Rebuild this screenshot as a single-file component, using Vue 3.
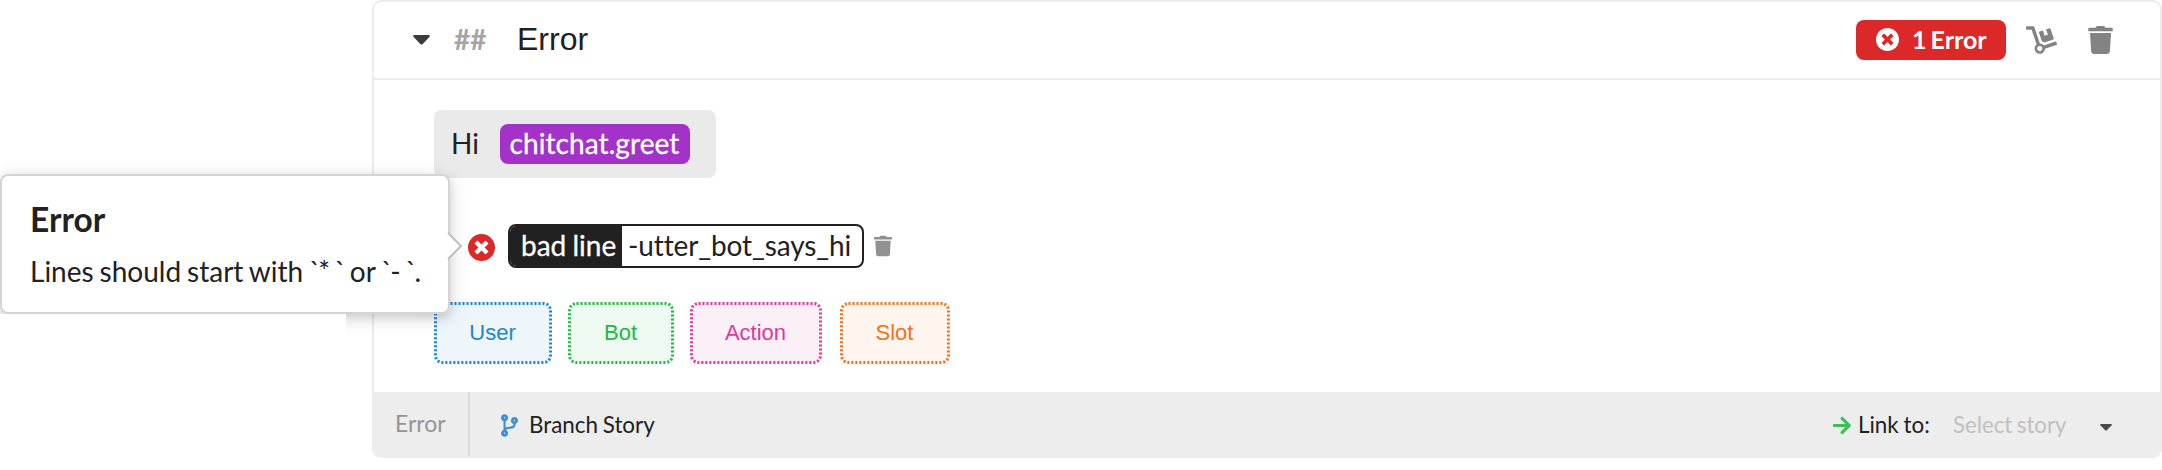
<script setup>
const paths = {
  error: 'M256 8C119 8 8 119 8 256s111 248 248 248 248-111 248-248S393 8 256 8zm121.6 313.1c4.7 4.7 4.7 12.3 0 17L338 377.6c-4.7 4.7-12.3 4.7-17 0L256 312l-65.1 65.6c-4.7 4.7-12.3 4.7-17 0L134.4 338c-4.7-4.7-4.7-12.3 0-17l65.6-65-65.6-65.1c-4.7-4.7-4.7-12.3 0-17l39.6-39.6c4.7-4.7 12.3-4.7 17 0l65 65.7 65.1-65.6c4.7-4.7 12.3-4.7 17 0l39.6 39.6c4.7 4.7 4.7 12.3 0 17L312 256l65.6 65.1z',
  trash: 'M432 32H312l-9.4-18.7A24 24 0 0 0 281.1 0H166.8a23.72 23.72 0 0 0-21.4 13.3L136 32H16A16 16 0 0 0 0 48v32a16 16 0 0 0 16 16h416a16 16 0 0 0 16-16V48a16 16 0 0 0-16-16zM32 128l21.2 339a48 48 0 0 0 47.9 45h245.8a48 48 0 0 0 47.9-45L416 128z',
  dolly: 'M294.2 277.7c18 5 34.7 13.4 49.5 24.7l161.5-53.8c8.4-2.8 12.9-11.9 10.1-20.2L454.9 47.2c-2.8-8.4-11.9-12.9-20.2-10.1l-61.1 20.4 33.1 99.4L346 177l-33.1-99.4-61.6 20.5c-8.4 2.8-12.9 11.9-10.1 20.2l53 159.4zm281 48.7L565 296c-2.8-8.4-11.9-12.9-20.2-10.1l-213.5 71.2c-17.2-22-43.6-36.4-73.5-37L158.4 21.9C154 8.8 141.8 0 128 0H16C7.2 0 0 7.2 0 16v32c0 8.8 7.2 16 16 16h88.9l92.2 276.7c-26.1 20.4-41.7 53.6-36 90.5 6.1 39.4 37.9 72.3 77.3 79.2 60.2 10.7 112.3-34.8 113.4-92.6l213.3-71.2c8.3-2.8 12.9-11.8 10.1-20.2zM256 464c-26.5 0-48-21.5-48-48s21.5-48 48-48 48 21.5 48 48-21.5 48-48 48z',
  branch: 'M384 144c0-44.2-35.8-80-80-80s-80 35.8-80 80c0 36.4 24.3 67.1 57.5 76.8-.6 16.1-4.2 28.5-11 36.9-15.4 19.2-49.3 22.4-85.2 25.7-28.2 2.6-57.4 5.4-81.3 16.9v-144c32.5-10.2 56-40.5 56-76.3 0-44.2-35.8-80-80-80S0 35.8 0 80c0 35.8 23.5 66.1 56 76.3v199.3C23.5 365.9 0 396.2 0 432c0 44.2 35.8 80 80 80s80-35.8 80-80c0-34-21.2-63.1-51.2-74.6 3.1-5.2 7.8-9.8 14.9-13.4 16.2-8.2 40.4-10.4 66.1-12.8 42.2-3.9 90-8.4 118.2-43.4 14-17.4 21.1-39.8 21.6-67.9 31.6-10.8 54.4-40.7 54.4-75.9zM80 64c8.8 0 16 7.2 16 16s-7.2 16-16 16-16-7.2-16-16 7.2-16 16-16zm0 384c-8.8 0-16-7.2-16-16s7.2-16 16-16 16 7.2 16 16-7.2 16-16 16zm224-320c8.8 0 16 7.2 16 16s-7.2 16-16 16-16-7.2-16-16 7.2-16 16-16z',
  arrow: 'M190.5 66.9l22.2-22.2c9.4-9.4 24.6-9.4 33.9 0L441 239c9.4 9.4 9.4 24.6 0 33.9L246.6 467.3c-9.4 9.4-24.6 9.4-33.9 0l-22.2-22.2c-9.5-9.5-9.3-25 .4-34.3L311.4 296H24c-13.3 0-24-10.7-24-24v-32c0-13.3 10.7-24 24-24h287.4L190.9 101.2c-9.8-9.3-10-24.8-.4-34.3z',
}
const actions = [
  { label: 'User', kind: 'user', w: 118 },
  { label: 'Bot', kind: 'bot', w: 106 },
  { label: 'Action', kind: 'action', w: 132 },
  { label: 'Slot', kind: 'slot', w: 110 },
]
</script>

<template>
  <div class="page">
    <section class="card">
      <header class="head">
        <svg class="caret" viewBox="0 0 17 10"><path d="M1.2 0h14.6q1.4.3.8 1.7L9.7 9q-1.2 1.2-2.4 0L.4 1.7Q-.2.3 1.2 0z" /></svg>
        <span class="hashes">##</span>
        <span class="title">Error</span>
        <span class="count">
          <svg viewBox="8 8 496 496"><path :d="paths.error" /></svg>
          <span class="up">1 Error</span>
        </span>
        <svg class="dolly" viewBox="0 0 576 512"><path :d="paths.dolly" /></svg>
        <svg class="trash" viewBox="0 0 448 512"><path :d="paths.trash" /></svg>
      </header>
      <div class="body">
        <div class="bubble"><span class="hi up">Hi</span><span class="intent"><span class="up">chitchat.greet</span></span></div>
        <div class="line">
          <svg class="bad" viewBox="8 8 496 496"><path :d="paths.error" /></svg>
          <div class="label"><span class="key"><span class="up">bad line</span></span><span class="value up">-utter_bot_says_hi</span></div>
          <svg class="trash small" viewBox="0 0 448 512"><path :d="paths.trash" /></svg>
        </div>
        <div class="actions">
          <button v-for="a in actions" :key="a.kind" :class="['add', a.kind]">
            <svg class="outline" :viewBox="`0 0 ${a.w} 62`"><rect x="1.5" y="1.5" :width="a.w - 3" height="59" rx="7" /></svg>
            <span>{{ a.label }}</span>
          </button>
        </div>
      </div>
      <footer class="foot">
        <span class="crumb">Error</span>
        <svg class="branch" viewBox="0 0 384 512"><path :d="paths.branch" /></svg>
        <span class="branch-text up">Branch Story</span>
        <svg class="arrow" viewBox="0 38 448 436"><path :d="paths.arrow" /></svg>
        <span class="link up">Link to:</span>
        <span class="select up">Select story</span>
        <svg class="caret tiny" viewBox="0 0 17 10"><path d="M1.2 0h14.6q1.4.3.8 1.7L9.7 9q-1.2 1.2-2.4 0L.4 1.7Q-.2.3 1.2 0z" /></svg>
      </footer>
    </section>
    <div class="shade"><div class="shade-box"></div></div>
    <aside class="popup">
      <h4>Error</h4>
      <p>Lines should start with <span class="code">`* `</span> or <span class="code">`- `</span>.</p>
      <svg class="pointer" viewBox="0 0 16 30"><path class="fill" d="M0 1L14 15L0 29z" /><path class="edge" d="M1 2L14 15L1 28" /></svg>
    </aside>
  </div>
</template>

<style>
body { background: #fff; }
</style>

<style scoped>
* { box-sizing: border-box; }
.page { position: relative; width: 2162px; height: 470px; overflow: hidden; font-family: Lato, "Liberation Sans", sans-serif; font-variant-ligatures: none; color: #212121; white-space: nowrap; }
svg { display: block; flex: none; fill: currentColor; }
.up { padding-bottom: 2px; }
.card { display: flex; flex-direction: column; width: 1790px; height: 458px; margin-left: 372px; border: 2px solid #ececec; border-bottom: 0; border-radius: 9px; overflow: hidden; }
.head { display: flex; align-items: center; height: 78px; flex: none; border-bottom: 2px solid #ececec; padding-left: 39px; }
.caret { width: 17px; height: 10px; color: #3b3b3b; }
.hashes { width: 63px; margin-left: 24px; padding-bottom: 2px; font-size: 28px; font-weight: 700; color: #a5a5a5; }
.title { padding-bottom: 3px; font-family: "Liberation Sans", Arial, sans-serif; font-size: 32px; line-height: 40px; }
.count { display: flex; align-items: center; width: 150px; height: 40px; margin-left: auto; padding-left: 20px; gap: 13px; border-radius: 8px; background: #db2828; color: #fff; font-size: 25px; font-weight: 700; word-spacing: -2px; }
.count svg { width: 23px; height: 23px; margin-bottom: 2px; }
.dolly { width: 31px; height: 28px; margin-left: 20px; color: #838383; }
.trash { width: 25px; height: 28px; margin: 0 47px 0 31px; color: #838383; }
.body { height: 312px; flex: none; padding: 30px 0 0 60px; }
.bubble { display: flex; align-items: center; width: 282px; height: 68px; padding-left: 17px; border-radius: 8px; background: #eaeaea; font-size: 28px; }
.hi { width: 49px; }
.intent { display: flex; align-items: center; justify-content: center; width: 190px; height: 40px; padding-right: 1px; border-radius: 8px; background: #a333c8; color: #fff; -webkit-text-stroke: .3px #fff; letter-spacing: .08px; }
.line { display: flex; align-items: center; height: 44px; margin: 46px 0 34px 34px; font-size: 28px; }
.bad { width: 27px; height: 27px; margin-top: 3px; color: #db2828; }
.label { display: flex; align-items: center; width: 356px; height: 44px; margin-left: 13px; border: 2px solid #212121; border-radius: 8px; overflow: hidden; }
.key { display: flex; align-items: center; width: 112px; height: 40px; padding-left: 11px; background: #212121; color: #fff; -webkit-text-stroke: .3px #fff; word-spacing: -1px; }
.value { margin-left: 6px; letter-spacing: -.12px; }
.small { width: 18px; height: 22px; margin: 0 0 0 10px; color: #919191; }
.actions { display: flex; }
.add { position: relative; display: flex; align-items: center; justify-content: center; height: 62px; margin: 0 16px 0 0; padding: 0 1px 0 0; border: 0; border-radius: 8px; font: 22px/30px "Liberation Sans", Arial, sans-serif; }
.outline { position: absolute; inset: 0; width: 100%; height: 100%; fill: none; stroke: currentColor; stroke-width: 3; stroke-dasharray: 2 2; }
.user { width: 118px; color: #2185d0; background: #eef6fb; }
.bot { width: 106px; color: #21ba45; background: #eef9f1; }
.action { width: 132px; margin-right: 18px; color: #e03997; background: #fcf0f7; }
.slot { width: 110px; color: #f2711c; background: #fef5ef; }
.foot { display: flex; align-items: center; height: 66px; flex: none; background: #ededed; font-size: 22.4px; word-spacing: -1px; }
.crumb { width: 96px; height: 64px; padding-left: 21px; margin-bottom: 2px; border-right: 2px solid #dadada; color: #949494; font-size: 23px; line-height: 63px; }
.branch { width: 17px; height: 23px; margin-left: 31px; color: #3c8fd6; }
.branch-text { margin-left: 11px; }
.arrow { width: 18px; height: 19px; margin-left: auto; color: #3bc257; }
.link { width: 95px; margin-left: 7px; }
.select { width: 147px; color: #c0c0c0; font-size: 22.2px; }
.tiny { width: 12px; height: 7px; margin: 5px 48px 0 0; color: #4a4a4a; }
.shade { position: absolute; left: 0; top: 120px; width: 560px; height: 254px; clip-path: polygon(0 0, 100% 0, 100% 100%, 346px 100%, 346px 194px, 0 194px); }
.shade-box { width: 450px; height: 140px; margin-top: 54px; border-radius: 8px; box-shadow: 0 4px 8px rgba(34, 36, 38, .12), 0 4px 20px rgba(34, 36, 38, .15); }
.popup { position: absolute; left: 0; top: 174px; width: 450px; height: 140px; padding: 22px 28px 0; border: 2px solid #d4d4d5; border-radius: 8px; background: #fff; }
.popup h4 { margin: 0; font-size: 33.5px; line-height: 42px; font-weight: 700; }
.popup p { margin: 11px 0 0; font-size: 28px; line-height: 40px; word-spacing: -1.2px; }
.code { letter-spacing: -2.2px; word-spacing: 2px; }
.pointer { position: absolute; left: 445px; top: 55px; width: 16px; height: 30px; }
.pointer .fill { fill: #fff; }
.pointer .edge { fill: none; stroke: #bfbfbf; stroke-width: 2; }
</style>
